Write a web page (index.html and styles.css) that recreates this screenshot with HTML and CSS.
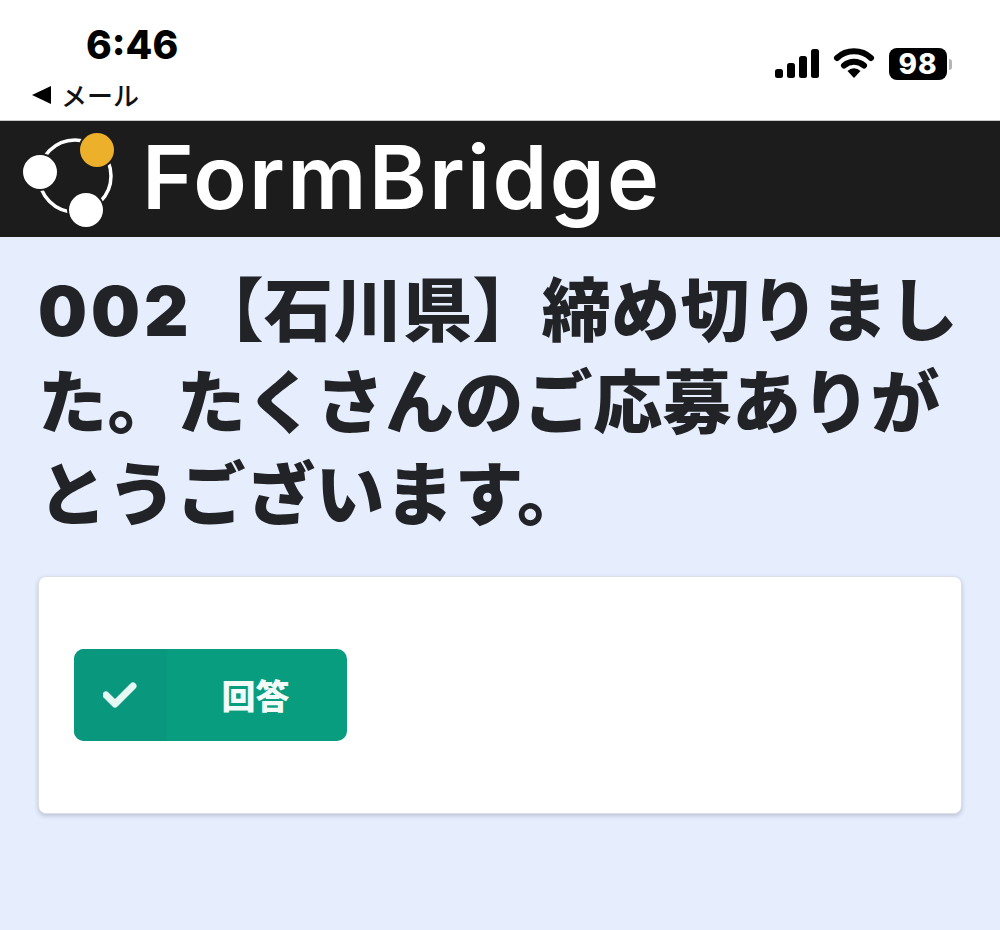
FILE: index.html
```html
<!DOCTYPE html>
<html lang="ja">
<head>
    <meta charset="utf-8" />
    <meta name="viewport" content="width=device-width, initial-scale=1" />
    <title>FormBridge</title>
    <link rel="stylesheet" href="styles.css">
</head>
<body>
    <div class="status-bar">
        <div class="status-left">
            <div class="clock">6:46</div>
            <div class="back-link"><span class="back-arrow"></span>メール</div>
        </div>
        <div class="status-right">
            <svg class="signal" width="44" height="30" viewBox="0 0 44 30">
                <rect x="0" y="21" width="8" height="9" rx="2.5" />
                <rect x="12" y="15" width="8" height="15" rx="2.5" />
                <rect x="24" y="8" width="8" height="22" rx="2.5" />
                <rect x="36" y="1" width="8" height="29" rx="2.5" />
            </svg>
            <svg class="wifi" width="42" height="32" viewBox="0 0 42 32">
                <path d="M4 11 A25 25 0 0 1 38 11" fill="none" stroke="#000" stroke-width="6" stroke-linecap="round" />
                <path d="M11 18.5 A15 15 0 0 1 31 18.5" fill="none" stroke="#000" stroke-width="6" stroke-linecap="round" />
                <path d="M14.5 24 A9 9 0 0 1 27.500 24 L21 31 Z" />
            </svg>
            <div class="battery">
                <span class="battery-level">98</span>
                <span class="battery-cap"></span>
            </div>
        </div>
    </div>

    <header class="brand-bar">
        <svg class="brand-logo" width="92" height="100" viewBox="0 0 92 100">
            <circle cx="53" cy="48" r="36" fill="none" stroke="#fff" stroke-width="3.500" />
            <circle cx="18" cy="44" r="19" fill="#1c1c1c" />
            <circle cx="18" cy="44" r="17" fill="#fff" />
            <circle cx="75" cy="22" r="19" fill="#1c1c1c" />
            <circle cx="75" cy="22" r="17" fill="#ecb02a" />
            <circle cx="64" cy="82" r="19" fill="#1c1c1c" />
            <circle cx="64" cy="82" r="17" fill="#fff" />
        </svg>
        <span class="brand-name">FormBridge</span>
    </header>

    <main class="content">
        <h1 class="form-title"><span class="form-number">002</span><span>【石川県】締め切りまし</span><span>た。たくさんのご応募ありが</span><span>とうございます。</span></h1>
        <div class="card">
            <button type="button" class="answer-btn">
                <span class="answer-icon">
                    <svg width="36" height="28" viewBox="0 0 36 28">
                        <path d="M3 14 L12 23 L30 5" fill="none" stroke="#e6f8f3" stroke-width="7" stroke-linecap="round" stroke-linejoin="round" />
                    </svg>
                </span>
                <span class="answer-label">回答</span>
            </button>
        </div>
    </main>
</body>
</html>
```

FILE: styles.css
```css
html, body {
    margin: 0;
    padding: 0;
}
body {
    width: 1000px;
    height: 930px;
    overflow: hidden;
    background-color: #e6edfd;
    color: #212529;
    font-family: "Roboto", "Noto Sans CJK JP", sans-serif;
}
.status-bar {
    height: 121px;
    box-sizing: border-box;
    background-color: #fff;
    border-bottom: 1px solid #c9c9c9;
    display: flex;
    justify-content: space-between;
}
.status-left {
    padding-left: 32px;
}
.clock {
    margin: 21px 0 0 54px;
    font-family: "Inter", "Liberation Sans", sans-serif;
    font-size: 39px;
    font-weight: 800;
    line-height: 47px;
    color: #000;
}
.back-link {
    display: flex;
    align-items: center;
    gap: 10px;
    height: 34px;
    margin-top: 9px;
    font-family: "Noto Sans CJK JP", sans-serif;
    font-size: 26px;
    font-weight: 500;
    color: #111;
}
.back-arrow {
    width: 0;
    height: 0;
    margin-top: 2px;
    border-top: 9px solid transparent;
    border-bottom: 9px solid transparent;
    border-right: 19px solid #000;
}
.status-right {
    display: flex;
    align-items: flex-start;
    padding: 48px 48px 0 0;
}
.signal {
    margin-right: 14px;
}
.wifi {
    margin-right: 14px;
    margin-top: -1px;
}
.battery {
    display: flex;
    align-items: center;
    gap: 2px;
}
.battery-level {
    width: 58px;
    height: 32px;
    border-radius: 8px;
    background-color: #000;
    color: #fff;
    text-align: center;
    font-family: "Inter", "Liberation Sans", sans-serif;
    font-size: 28px;
    font-weight: 800;
    line-height: 32px;
    letter-spacing: 1px;
}
.battery-cap {
    width: 3px;
    height: 11px;
    border-radius: 0 3px 3px 0;
    background-color: #b5b5b5;
}
.brand-bar {
    height: 116px;
    background-color: #1c1c1c;
    display: flex;
    align-items: center;
    padding-left: 22px;
    gap: 28px;
}
.brand-logo {
    flex-shrink: 0;
    margin-top: -2px;
}
.brand-name {
    font-family: "Inter", "Open Sans", sans-serif;
    font-size: 88px;
    font-weight: 600;
    line-height: 1;
    letter-spacing: 2.3px;
    color: #fff;
    margin-top: -4px;
}
.content {
    padding: 28px 38px 0;
}
.form-title {
    margin: 0;
    width: 924px;
    font-size: 69px;
    font-weight: 900;
    line-height: 92px;
    letter-spacing: 0.4px;
    font-family: "Inter", "Noto Sans CJK JP", sans-serif;
    color: #212326;
}
.form-number {
    letter-spacing: 4px;
    margin-right: 2px;
}
.card {
    margin-top: 35px;
    width: 924px;
    height: 238px;
    box-sizing: border-box;
    padding: 72px 35px 0;
    background-color: #fff;
    border-radius: 8px;
    border: 1px solid #dcdfe8;
    box-shadow: 0 2px 4px rgba(60, 70, 100, 0.25);
}
.answer-btn {
    display: flex;
    width: 273px;
    height: 92px;
    padding: 0;
    border: none;
    border-radius: 10px;
    overflow: hidden;
    background-color: #099d80;
    color: #f2fbf8;
}
.answer-icon {
    width: 93px;
    height: 100%;
    background-color: #09987d;
    display: flex;
    align-items: center;
    justify-content: center;
}
.answer-label {
    flex: 1;
    align-self: center;
    padding-right: 3px;
    text-align: center;
    font-family: "Noto Sans CJK JP", sans-serif;
    font-size: 34px;
    font-weight: 900;
    line-height: 1;
}
```
